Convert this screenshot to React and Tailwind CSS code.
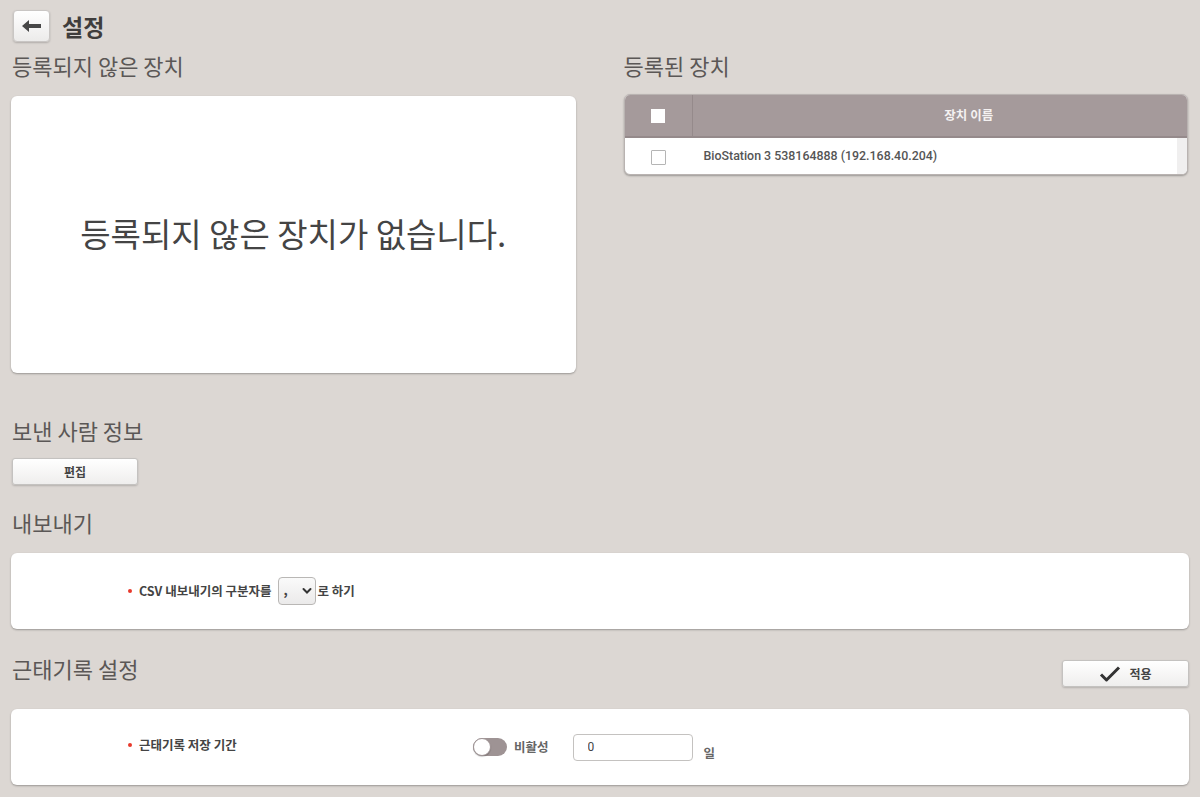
import { useState } from 'react';

const KR = "font-['Noto_Sans_CJK_KR','Noto_Sans',sans-serif]";

function BackButton() {
  return (
    <button className="w-[37px] h-[32px] rounded-[4px] border border-[#c9c6c4] bg-gradient-to-b from-white to-[#ecebea] shadow-[0_1px_2px_rgba(0,0,0,0.2)] flex items-center justify-center">
      <svg width="21" height="14" viewBox="0 0 21 14">
        <path d="M1 7l7-6v4h12v4H8v4z" fill="#474747" />
      </svg>
    </button>
  );
}

function PlainButton({ children, className = '' }) {
  return (
    <button
      className={`h-[27px] rounded-[3px] border border-[#c4c2c0] bg-gradient-to-b from-white to-[#efeeed] shadow-[0_1px_2px_rgba(0,0,0,0.18)] flex items-center justify-center text-[12px] font-bold text-[#444] ${className}`}
    >
      {children}
    </button>
  );
}

function SectionTitle({ children }) {
  return <h2 className="text-[22px] leading-[28px] text-[#5b5756]">{children}</h2>;
}

function Dot() {
  return <span className="w-[4px] h-[4px] rounded-full bg-[#e8392c] mr-[7px] shrink-0" />;
}

function Toggle({ on, onChange }) {
  return (
    <button
      onClick={() => onChange(!on)}
      className="relative w-[34px] h-[18px] rounded-full bg-[#9e9394]"
    >
      <span
        className="absolute top-0 left-0 w-[18px] h-[18px] rounded-full bg-white border border-[#9e9394] shadow-[0_1px_1px_rgba(0,0,0,0.2)]"
      />
    </button>
  );
}

export default function App() {
  const [enabled, setEnabled] = useState(false);
  const [days, setDays] = useState('0');

  return (
    <div className={`min-h-screen bg-[#dcd7d3] px-[11px] pt-[10px] pb-4 ${KR}`}>
      {/* Header */}
      <div className="flex items-center gap-[12px] pl-[2px]">
        <BackButton />
        <h1 className="text-[23px] font-bold text-[#3f3d3c] leading-[32px]">설정</h1>
      </div>

      {/* Devices */}
      <div className="grid grid-cols-2 gap-x-[48px] mt-[9px] pr-[1px]">
        <div className="flex flex-col">
          <div className="pl-[1px]"><SectionTitle>등록되지 않은 장치</SectionTitle></div>
          <div className="mt-[17px] h-[277px] bg-white rounded-[6px] shadow-[0_1px_2px_rgba(0,0,0,0.3)] flex items-center justify-center">
            <p className="text-[33px] text-[#444] leading-none pb-[2px]">등록되지 않은 장치가 없습니다.</p>
          </div>
        </div>

        <div className="flex flex-col">
          <SectionTitle>등록된 장치</SectionTitle>
          <div className="mt-[15px] rounded-[6px] overflow-hidden bg-white shadow-[0_1px_2px_rgba(0,0,0,0.3)] border border-[#b9b3b1]">
            <div className="flex h-[43px] bg-[#a59a9b] border-b-2 border-[#958a8b]">
              <div className="w-[68px] flex items-center justify-center border-r border-[#958a8b]">
                <span className="w-[14px] h-[14px] bg-white" />
              </div>
              <div className="flex-1 flex items-center justify-center pl-[58px] text-[12.5px] font-bold text-[#f4f1f1]">
                장치 이름
              </div>
            </div>
            <div className="flex h-[36px]">
              <div className="w-[68px] flex items-center justify-center pt-[2px]">
                <span className="w-[15px] h-[15px] border border-[#b5b5b5] bg-white rounded-[1px]" />
              </div>
              <div className="flex-1 flex items-center pl-[11px] text-[12.4px] font-medium text-[#555] font-['Roboto',sans-serif]">
                BioStation 3 538164888 (192.168.40.204)
              </div>
              <div className="w-[10px] bg-[#f0efef]" />
            </div>
          </div>
        </div>
      </div>

      {/* Sender info */}
      <div className="mt-[43px] pl-[1px]">
        <SectionTitle>보낸 사람 정보</SectionTitle>
      </div>
      <PlainButton className="mt-[14px] ml-[1px] w-[126px]">편집</PlainButton>

      {/* Export */}
      <div className="mt-[23px] pl-[1px]">
        <SectionTitle>내보내기</SectionTitle>
      </div>
      <div className="mt-[17px] h-[76px] bg-white rounded-[6px] shadow-[0_1px_2px_rgba(0,0,0,0.3)] flex items-center pl-[117px]">
        <Dot />
        <span className="text-[12.5px] font-bold text-[#444]">CSV 내보내기의 구분자를</span>
        <div className="ml-[6px] w-[38px] h-[28px] rounded-[4px] border border-[#b9b7b5] bg-gradient-to-b from-[#fafafa] to-[#ebeaea] flex items-center justify-between pl-[5px] pr-[3px]">
          <span className="text-[13px] font-bold text-[#444] leading-none -mt-[4px]">,</span>
          <svg width="10" height="8" viewBox="0 0 10 8">
            <path d="M1.5 2l3.5 3.5L8.5 2" stroke="#333" strokeWidth="2" fill="none" strokeLinecap="round" />
          </svg>
        </div>
        <span className="ml-[2px] text-[12.5px] font-bold text-[#444]">로 하기</span>
      </div>

      {/* Attendance */}
      <div className="mt-[25px] flex items-start justify-between pl-[1px]">
        <SectionTitle>근태기록 설정</SectionTitle>
        <PlainButton className="mt-[6px] w-[127px] gap-[8px]">
          <svg width="22" height="16" viewBox="0 0 22 16">
            <path d="M2 8.5l5.5 5.5L20 1.5" stroke="#333" strokeWidth="3" fill="none" strokeLinejoin="round" />
          </svg>
          <span>적용</span>
        </PlainButton>
      </div>
      <div className="mt-[22px] h-[76px] bg-white rounded-[6px] shadow-[0_1px_2px_rgba(0,0,0,0.3)] flex items-center pl-[117px]">
        <div className="w-[345px] flex items-center -mt-[4px]">
          <Dot />
          <span className="text-[12.5px] font-bold text-[#444]">근태기록 저장 기간</span>
        </div>
        <Toggle on={enabled} onChange={setEnabled} />
        <span className="ml-[7px] text-[12.5px] font-bold text-[#666]">비활성</span>
        <input
          value={days}
          onChange={e => setDays(e.target.value)}
          className="ml-[24px] w-[120px] h-[27px] rounded-[4px] border border-[#c4c2c0] px-[14px] text-[12px] text-[#444] outline-none font-['Roboto',sans-serif]"
        />
        <span className="ml-[11px] mt-[12px] text-[12.5px] font-bold text-[#666]">일</span>
      </div>
    </div>
  );
}
